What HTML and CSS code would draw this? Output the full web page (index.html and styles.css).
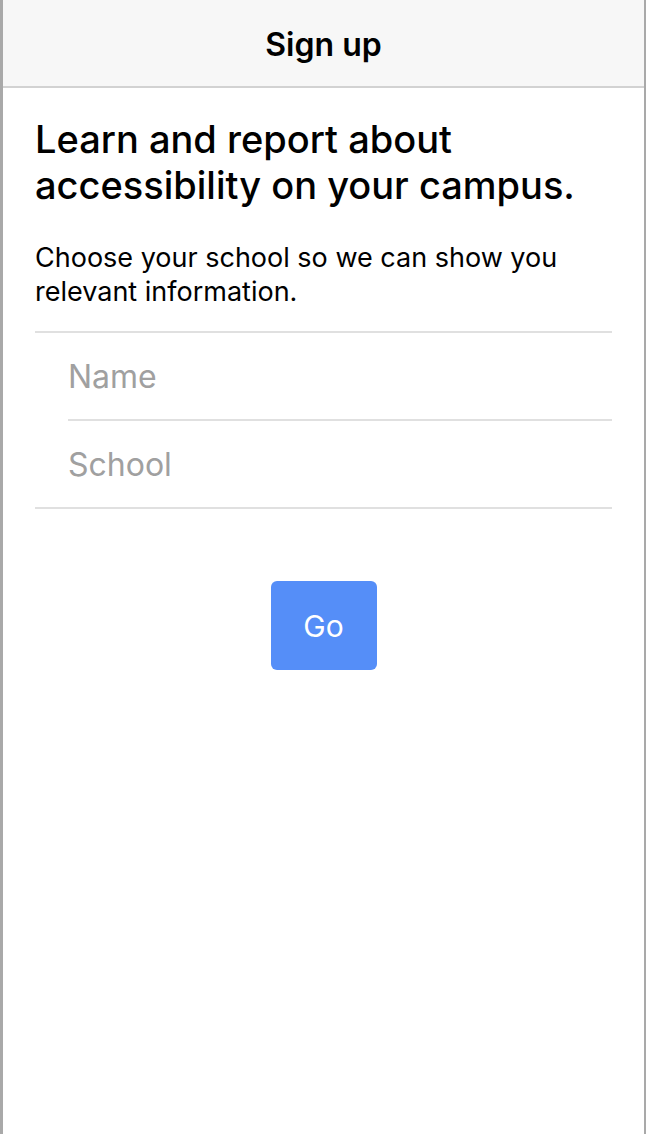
FILE: index.html
```html
<!DOCTYPE html>
<html>
<head>
<meta charset="utf-8">
<title>Sign up</title>
<link rel="stylesheet" href="styles.css">
</head>
<body>
<div class="screen">
  <div class="navbar">
    <span class="nav-title">Sign up</span>
  </div>

  <div class="content">
    <h1 class="intro">Learn and report about accessibility on your campus.</h1>
    <p class="lead">Choose your school so we can show you relevant information.</p>

    <div class="fields">
      <div class="field"><input type="text" placeholder="Name"></div>
      <div class="field"><input type="text" placeholder="School"></div>
    </div>

    <div class="actions">
      <button class="go">Go</button>
    </div>
  </div>
</div>
</body>
</html>
```

FILE: styles.css
```css
html, body {
  margin: 0;
  height: 100%;
}
body {
  font-family: Inter, "Liberation Sans", Arial, sans-serif;
  color: #000;
  background: #fff;
}
.screen {
  box-sizing: border-box;
  height: 1134px;
  border-left: 3px solid #a9a9a9;
  border-right: 2px solid #a9a9a9;
  background: #fff;
}
.navbar {
  height: 86px;
  background: #f7f7f7;
  border-bottom: 2px solid #d2d2d2;
  display: flex;
  align-items: center;
  justify-content: center;
}
.nav-title {
  font-size: 32px;
  font-weight: 600;
  margin-top: 2px;
}
.content {
  padding: 0 32px;
}
.intro {
  margin: 28px 0 0;
  font-size: 38px;
  line-height: 46px;
  font-weight: 500;
}
.lead {
  margin: 33px 0 0;
  font-size: 27px;
  line-height: 34px;
  font-weight: 400;
}
.fields {
  margin-top: 22px;
  border-top: 2px solid #e0e0e0;
  border-bottom: 2px solid #e0e0e0;
}
.field {
  margin-left: 33px;
  height: 86px;
  display: flex;
  align-items: center;
}
.field + .field {
  border-top: 2px solid #e0e0e0;
}
.field input {
  border: 0;
  outline: none;
  padding: 0;
  width: 100%;
  font-family: inherit;
  font-size: 32px;
  color: #000;
  background: transparent;
}
.field input::placeholder {
  color: #a0a0a0;
}
.actions {
  display: flex;
  justify-content: center;
  margin-top: 72px;
}
.go {
  width: 106px;
  height: 89px;
  border: 0;
  border-radius: 6px;
  background: #558ef8;
  color: #fff;
  font-family: inherit;
  font-size: 30px;
  font-weight: 400;
}
```
